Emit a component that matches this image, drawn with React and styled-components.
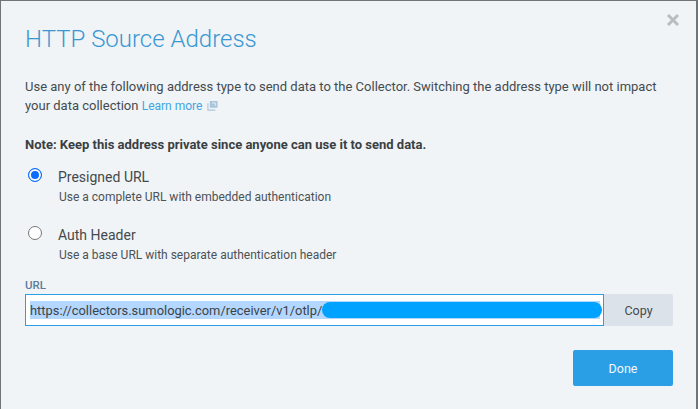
import React from 'react'
import styled, { createGlobalStyle } from 'styled-components'

const GlobalStyle = createGlobalStyle`
  html, body {
    margin: 0;
    padding: 0;
    background: #f0f4f6;
  }
  * {
    box-sizing: border-box;
  }
`

const Dialog = styled.div`
  width: 698px;
  height: 409px;
  padding: 25px 24px 0 24px;
  background: #f0f4f6;
  border-top: 1px solid #6f7478;
  border-left: 1px solid #6f7478;
  border-right: 2px solid #6f7478;
  font-family: Roboto, "Liberation Sans", sans-serif;
  color: #444b50;
  position: relative;
`

const Close = styled.svg`
  position: absolute;
  top: 12px;
  right: 16px;
  width: 14px;
  height: 14px;
`

const Title = styled.h2`
  margin: 0;
  font-size: 24px;
  line-height: 27px;
  font-weight: 300;
  color: #3a97d3;
`

const Intro = styled.p`
  margin: 24px 0 0;
  font-size: 13px;
  line-height: 19px;
`

const LearnMore = styled.a`
  color: #3fa6e4;
  font-size: 12px;
  text-decoration: none;
`

const External = styled.svg`
  width: 11px;
  height: 11px;
  margin-left: 5px;
  vertical-align: -1px;
`

const Note = styled.p`
  margin: 19px 0 0;
  font-size: 13px;
  line-height: 19px;
  font-weight: 700;
  color: #3a3f43;
`

const Options = styled.div`
  display: flex;
  flex-direction: column;
  gap: 21px;
  margin-top: 14px;
`

const Option = styled.div`
  display: grid;
  grid-template-columns: 30px 1fr;
  padding-left: 3px;
`

const Radio = styled.span`
  width: 14px;
  height: 14px;
  border-radius: 50%;
  background: ${p => (p.$on ? '#0a6cff' : '#fff')};
  border: 1px solid ${p => (p.$on ? '#0a6cff' : '#767676')};
  box-shadow: ${p => (p.$on ? 'inset 0 0 0 2px #fff' : 'none')};
`

const OptionName = styled.div`
  font-size: 14px;
  line-height: 18px;
  color: #44494d;
`

const OptionHint = styled.div`
  margin-top: 3px;
  margin-left: 1px;
  font-size: 12px;
  line-height: 16px;
  color: #4c5256;
`

const FieldLabel = styled.label`
  display: block;
  margin-top: 15px;
  font-size: 11.5px;
  line-height: 14px;
  font-weight: 500;
  color: #5b7d99;
`

const Field = styled.div`
  display: flex;
  width: 648px;
  height: 32px;
  margin-top: 2px;
`

const UrlBox = styled.div`
  flex: 1;
  display: flex;
  align-items: center;
  padding-left: 4px;
  background: #fff;
  border: 1px solid #2b9fe6;
`

const Selection = styled.div`
  display: flex;
  align-items: center;
  width: 570px;
  height: 18px;
  font-size: 12.9px;
  color: #3c4348;
  background: #b3d7ff;
  white-space: nowrap;
`

const Redacted = styled.span`
  flex: 1;
  height: 16px;
  margin-right: -2px;
  border-radius: 8px;
  background: #00a2ff;
`

const CopyButton = styled.button`
  width: 69px;
  border: 0;
  border-radius: 0 2px 2px 0;
  background: #dce2e9;
  color: #44494d;
  font: 400 12.5px Roboto, sans-serif;
`

const Footer = styled.div`
  display: flex;
  justify-content: flex-end;
  width: 648px;
  margin-top: 24px;
`

const DoneButton = styled.button`
  width: 100px;
  height: 36px;
  border: 0;
  border-radius: 2px;
  background: #2b9fe6;
  color: #f2f8fc;
  font: 400 12.5px Roboto, sans-serif;
`

export default function App() {
  return (
    <>
      <GlobalStyle />
      <Dialog>
        <Close viewBox="0 0 14 14">
          <path d="M2 2l10 10M12 2l-10 10" stroke="#b9bdc0" strokeWidth="3" fill="none" />
        </Close>
        <Title>HTTP Source Address</Title>
        <Intro>
          Use any of the following address type to send data to the Collector. Switching the address type will not impact
          your data collection{' '}
          <LearnMore href="#">
            Learn more
            <External viewBox="0 0 12 12">
              <rect x="3" y="1" width="8.5" height="7.5" rx="0.5" fill="#a9c6dc" />
              <path d="M1 3.500v7.500h8" stroke="#a9c6dc" strokeWidth="1.2" fill="none" />
              <path d="M5.500 3.200h3.500v3.300" stroke="#f0f4f6" strokeWidth="0.9" fill="none" />
            </External>
          </LearnMore>
        </Intro>
        <Note>Note: Keep this address private since anyone can use it to send data.</Note>
        <Options>
          <Option>
            <Radio $on />
            <div>
              <OptionName>Presigned URL</OptionName>
              <OptionHint>Use a complete URL with embedded authentication</OptionHint>
            </div>
          </Option>
          <Option>
            <Radio />
            <div>
              <OptionName>Auth Header</OptionName>
              <OptionHint>Use a base URL with separate authentication header</OptionHint>
            </div>
          </Option>
        </Options>
        <FieldLabel>URL</FieldLabel>
        <Field>
          <UrlBox>
            <Selection>
              https://collectors.sumologic.com/receiver/v1/otlp/
              <Redacted />
            </Selection>
          </UrlBox>
          <CopyButton>Copy</CopyButton>
        </Field>
        <Footer>
          <DoneButton>Done</DoneButton>
        </Footer>
      </Dialog>
    </>
  )
}
